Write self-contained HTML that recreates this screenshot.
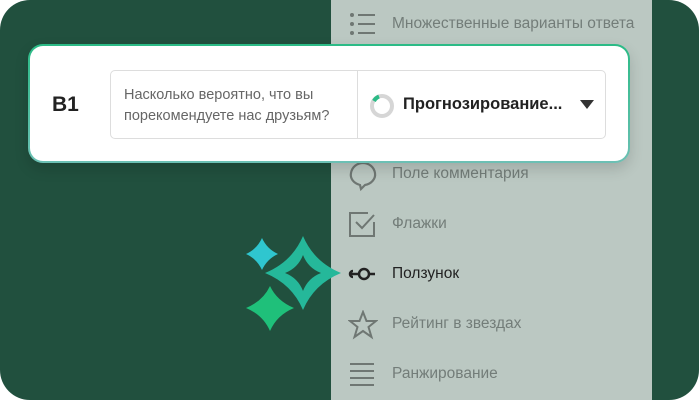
<!DOCTYPE html>
<html><head><meta charset="utf-8"><style>
*{margin:0;padding:0;box-sizing:border-box}
body{width:699px;height:400px;background:#fff;overflow:hidden;font-family:"Liberation Sans","Noto Sans CJK SC",sans-serif}
.bg{position:absolute;left:0;top:0;width:699px;height:400px;background:#21503e;border-radius:30px;overflow:hidden}
.panel{position:absolute;left:331px;top:0;width:321px;height:400px;background:#bbc8c2}
.item{position:absolute;left:392px;font-size:15.5px;color:#737d79;line-height:20px}
.ic{position:absolute;left:348px}
.card{position:absolute;left:28px;top:44px;width:602px;height:119px;border-radius:15px;background:linear-gradient(180deg,#2bbb86,#6cc0b4);padding:2px;box-shadow:0 6px 14px rgba(0,0,0,.15)}
.inner{width:100%;height:100%;background:#fff;border-radius:13px;position:relative}
.box{position:absolute;left:80px;top:24px;width:496px;height:69px;border:1px solid #ddd;border-radius:5px}
</style></head><body>
<div class="bg">
<div class="panel"></div>
<svg class="ic" style="top:12px" width="30" height="26" viewBox="0 0 30 26"><g fill="#6f7773"><circle cx="4" cy="3" r="2"/><circle cx="4" cy="12" r="2"/><circle cx="4" cy="21" r="2"/><rect x="10" y="2" width="17" height="2"/><rect x="10" y="11" width="17" height="2"/><rect x="10" y="20" width="17" height="2"/></g></svg>
<div class="item" style="top:14px">Множественные варианты ответа</div>
<svg class="ic" style="top:158px" width="30" height="34" viewBox="0 0 30 34"><path d="M12 27 C5 25 2 20 3 15 C4 9 9 5 15 5 C21 5 26 9 27 15 C28 21 23 26 17 27 L13 31 Z" stroke="#6f7773" stroke-width="2.2" fill="none"/></svg>
<div class="item" style="top:164px">Поле комментария</div>
<svg class="ic" style="top:210px" width="30" height="30" viewBox="0 0 30 30"><path d="M26 12 V26 H2 V3 H20" stroke="#6f7773" stroke-width="2" fill="none"/><path d="M8 12 L14 18 L26 5" stroke="#6f7773" stroke-width="2" fill="none"/></svg>
<div class="item" style="top:214px">Флажки</div>
<svg style="position:absolute;left:324px;top:268px" width="10" height="12"><path d="M0 0 L8 6 L0 12Z" fill="#2bbb86"/></svg>
<svg class="ic" style="top:264px" width="30" height="20" viewBox="0 0 30 20"><circle cx="16" cy="10" r="5" stroke="#222" stroke-width="2.5" fill="none"/><path d="M3 10H10M21 10H27M5 7 a3 3 0 0 0 0 6" stroke="#222" stroke-width="2.5" fill="none"/></svg>
<div class="item" style="top:264px;color:#222">Ползунок</div>
<svg class="ic" style="top:310px" width="30" height="30" viewBox="0 0 30 30"><path d="M15 2 L18.5 11 L28 11 L20.5 17 L23.5 27 L15 21 L6.5 27 L9.5 17 L2 11 L11.5 11Z" stroke="#6f7773" stroke-width="2" fill="none"/></svg>
<div class="item" style="top:314px">Рейтинг в звездах</div>
<svg class="ic" style="top:362px" width="30" height="26" viewBox="0 0 30 26"><g fill="#6f7773"><rect x="2" y="1" width="24" height="2"/><rect x="2" y="8" width="24" height="2"/><rect x="2" y="15" width="24" height="2"/><rect x="2" y="22" width="24" height="2"/></g></svg>
<div class="item" style="top:364px">Ранжирование</div>
<svg style="position:absolute;left:240px;top:232px" width="105" height="105" viewBox="240 232 105 105">
<path d="M262 238 Q267 249 278 254 Q267 259 262 270 Q257 259 246 254 Q257 249 262 238Z" fill="#2fc6cf"/>
<path fill-rule="evenodd" fill="#25b89a" d="M303 236 Q314 262 341 273 Q314 284 303 310 Q292 284 265 273 Q292 262 303 236Z M303 255 Q298 268 285 273 Q298 278 303 291 Q308 278 321 273 Q308 268 303 255Z"/>
<path d="M270 286 Q277 301 294 308 Q277 315 270 331 Q263 315 246 308 Q263 301 270 286Z" fill="#1fc07a"/>
</svg>
<div class="card"><div class="inner">
<div style="position:absolute;left:22px;top:47px;font-size:21px;font-weight:bold;color:#222">B1</div>
<div class="box">
<div style="position:absolute;left:13px;top:14px;font-size:14.5px;line-height:21px;color:#666">Насколько вероятно, что вы<br>порекомендуете нас друзьям?</div>
<div style="position:absolute;left:246px;top:0;width:1px;height:67px;background:#ddd"></div>
<svg style="position:absolute;left:258px;top:22px" width="26" height="26" viewBox="0 0 26 26"><circle cx="13" cy="13" r="10" stroke="#d6d6d6" stroke-width="4" fill="none"/><path d="M5 8 A10 10 0 0 1 10 3.5" stroke="#2bbb86" stroke-width="4" fill="none"/></svg>
<div style="position:absolute;left:292px;top:24px;font-size:16.5px;font-weight:bold;color:#222">Прогнозирование...</div>
<svg style="position:absolute;left:469px;top:29px" width="14" height="10"><path d="M0 0H14L7 9Z" fill="#333"/></svg>
</div>
</div></div>
</div>
</body></html>
